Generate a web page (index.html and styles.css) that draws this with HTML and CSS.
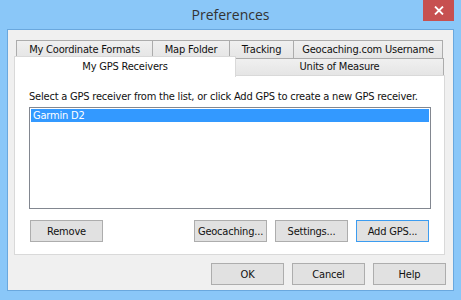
FILE: index.html
```html
<!DOCTYPE html>
<html>
<head>
<meta charset="utf-8">
<link rel="stylesheet" href="styles.css">
</head>
<body>
<div class="window">
  <div class="titlebar">
    <span class="title">Preferences</span>
    <div class="close"><svg width="10" height="9" viewBox="0 0 10 9"><path d="M1 0.5 L9 8.5 M9 0.5 L1 8.5" stroke="#fff" stroke-width="1.8" fill="none"/></svg></div>
  </div>
  <div class="client">
    <div class="tabs">
      <div class="tabrow row1">
        <div class="tab t1">My Coordinate Formats</div>
        <div class="tab t2">Map Folder</div>
        <div class="tab t3">Tracking</div>
        <div class="tab t4">Geocaching.com Username</div>
      </div>
      <div class="tabrow row2">
        <div class="tab selected">My GPS Receivers</div>
        <div class="tab t6">Units of Measure</div>
      </div>
    </div>
    <div class="panel">
      <div class="label">Select a GPS receiver from the list, or click Add GPS to create a new GPS receiver.</div>
      <div class="list">
        <div class="item sel">Garmin D2</div>
      </div>
      <div class="btnrow">
        <button class="btn">Remove</button>
        <div class="group">
          <button class="btn">Geocaching...</button>
          <button class="btn">Settings...</button>
          <button class="btn default">Add GPS...</button>
        </div>
      </div>
    </div>
    <div class="footer">
      <button class="btn">OK</button>
      <button class="btn">Cancel</button>
      <button class="btn">Help</button>
    </div>
  </div>
</div>
</body>
</html>
```
FILE: styles.css
```css
* { box-sizing: border-box; }
html, body { margin: 0; padding: 0; }
body { background: #8ac7f8; width: 461px; height: 300px; overflow: hidden; }
.window {
  width: 461px; height: 300px;
  background: #8ac7f8;
  font-family: "DejaVu Sans Condensed", "Liberation Sans", sans-serif;
  font-size: 11px;
  letter-spacing: -0.2px;
  color: #111;
}
.titlebar {
  position: relative;
  height: 29px;
  text-align: center;
}
.title {
  display: inline-block;
  font-family: "Open Sans", "Noto Sans", sans-serif;
  font-size: 14px;
  letter-spacing: 0;
  color: #333;
  line-height: 30px;
}
.close {
  position: absolute;
  top: 0; right: 7px;
  width: 31px; height: 21px;
  background: #c75050;
  display: flex; align-items: center; justify-content: center;
}
.close svg { display: block; }
.client {
  margin: 0 7px;
  height: 262px;
  border: 1px solid #6aa8de;
  background: #f0f0f0;
  padding: 10px 7px 5px 6px;
  display: flex; flex-direction: column;
}
.tabs { display: flex; flex-direction: column; }
.tabrow { display: flex; }
.row1 { height: 18px; padding-left: 2px; }
.row2 { height: 17px; }
.tab {
  border: 1px solid #acacac;
  border-bottom: none;
  background: linear-gradient(#f0f0f0, #e5e5e5);
  text-align: center;
  line-height: 17px;
  white-space: nowrap;
}
.row1 .tab { height: 18px; }
.t1 { width: 137px; }
.t2 { width: 78px; margin-left: -1px; }
.t3 { width: 65px; margin-left: -1px; }
.t4 { width: 150px; margin-left: -1px; }
.row2 .tab { height: 17px; line-height: 16px; }
.tab.selected {
  position: relative; z-index: 2;
  width: 222px;
  height: 21px;
  margin-top: -2px;
  background: #fff;
  border-color: #d9d9d9;
  line-height: 19px;
}
.t6 { width: 209px; margin-left: -1px; }
.panel {
  position: relative; z-index: 1;
  width: 431px;
  height: 180px;
  background: #fff;
  border: 1px solid #d9d9d9;
  padding: 14px 13px 0 14px;
  display: flex; flex-direction: column;
}
.label { line-height: 13px; height: 13px; white-space: nowrap; }
.list {
  margin-top: 4px;
  height: 102px;
  border: 1px solid #828790;
  padding: 1px;
}
.item { height: 13px; line-height: 13px; padding-left: 2px; }
.item.sel { background: #3399ff; color: #fff; }
.btnrow {
  margin-top: 11px;
  display: flex; justify-content: space-between;
  padding: 0 2px 0 1px;
}
.group { display: flex; gap: 8px; }
.btn {
  width: 73px; height: 22px;
  border: 1px solid #adadad;
  background: #e1e1e1;
  font-family: inherit; font-size: 11px;
  letter-spacing: -0.2px;
  color: #111;
  padding: 0;
  margin: 0;
}
.btn.default { border-color: #3c9cf0; }
.footer {
  margin-top: 8px;
  display: flex; justify-content: flex-end; gap: 8px;
}
```
